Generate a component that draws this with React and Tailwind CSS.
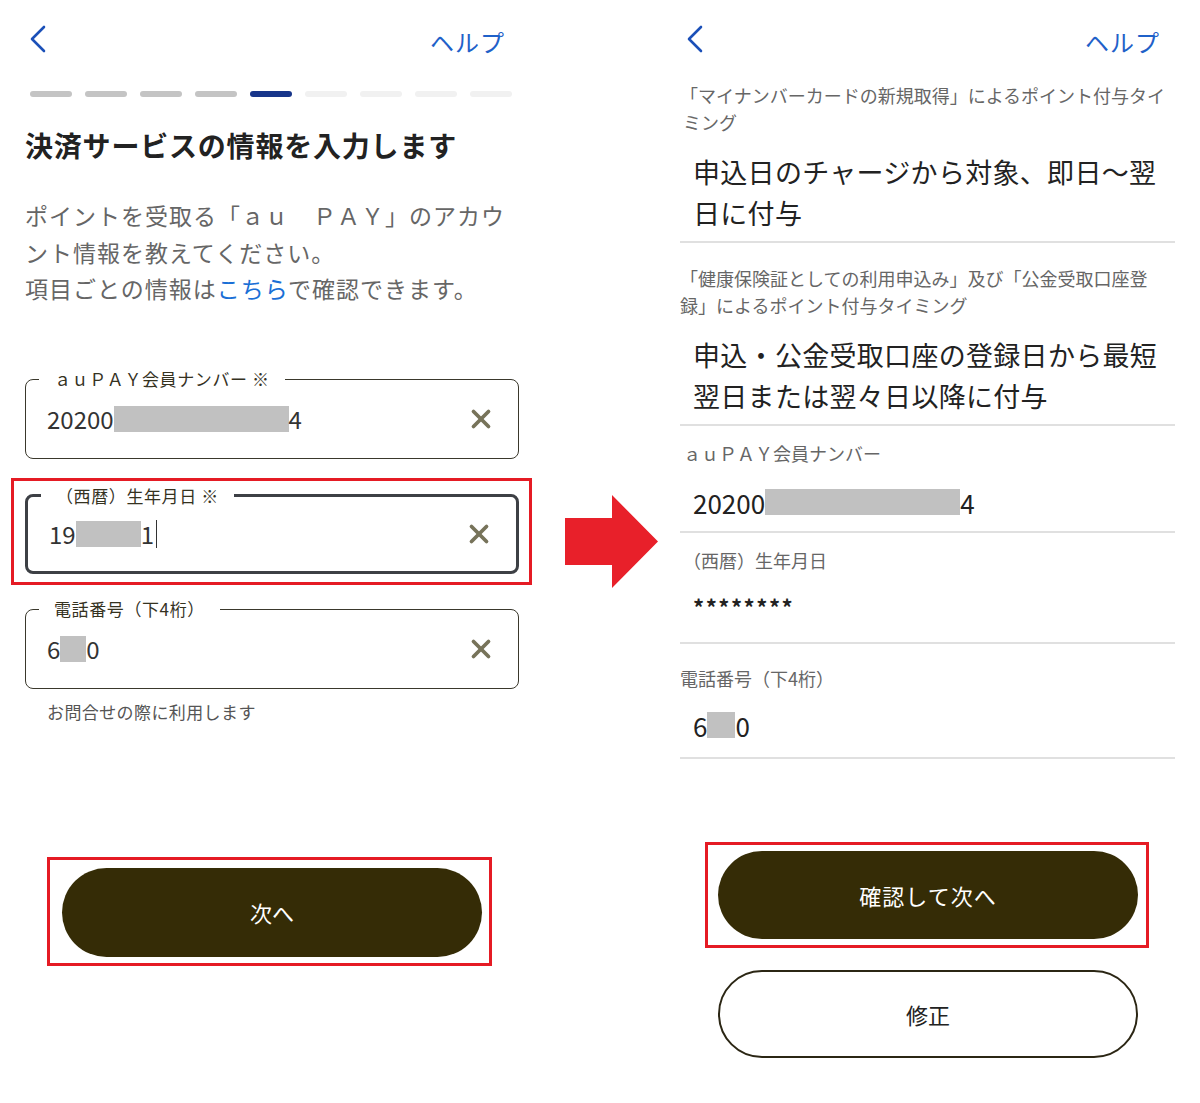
import { X } from "lucide-react";

const BackIcon = () => (
  <svg width="17" height="28" viewBox="0 0 17 28" fill="none">
    <path d="M15 2 L3 14 L15 26" stroke="#1b50b8" strokeWidth="2.6" strokeLinecap="round" strokeLinejoin="round" />
  </svg>
);

const Header = ({ left, right }) => (
  <div className="flex h-[70px] items-start justify-between pt-[25px]">
    <div className={left}>
      <BackIcon />
    </div>
    <div className={`${right} text-[24px] leading-[34px] tracking-[1px] text-[#1f61c9]`}>ヘルプ</div>
  </div>
);

const steps = ["done", "done", "done", "done", "now", "todo", "todo", "todo", "todo"];

const Field = ({ label, children, focused }) => (
  <div
    className={`relative flex h-[80px] items-center rounded-[8px] pl-[21px] pr-[22px] ${
      focused ? "border-[3px] border-[#3d4045]" : "border-[1.5px] border-[#3a382c]"
    }`}
  >
    <div className="absolute -top-[11px] left-[13px] bg-white px-[15px] text-[17px] leading-[20px] tracking-[0.6px] text-[#35321f]">
      {label}
    </div>
    <div className="flex flex-1 items-center text-[24px] leading-[30px] text-[#333]">{children}</div>
    <X size={30} strokeWidth={3} color="#77735a" />
  </div>
);

const Mask = ({ w }) => <span className={`${w} inline-block h-[26px] bg-[#c1c1c1]`} />;

const RowLabel = ({ children }) => (
  <div className="text-[18px] leading-[27px] text-[#666]">{children}</div>
);

const Divider = () => <div className="h-[2px] bg-[#e0e0e0]" />;

export default function App() {
  return (
    <div className="flex h-[1103px] w-[1200px] bg-white font-['Noto_Sans_CJK_JP','Noto_Sans',sans-serif]">
      {/* left screen */}
      <div className="w-[545px] pl-[25px] pr-[26px]">
        <Header left="ml-[4px]" right="mr-[14px]" />
        <div className="mt-[21px] flex gap-[13px] px-[5px]">
          {steps.map((s, i) => (
            <div
              key={i}
              className={`h-[6px] w-[42px] rounded-full ${
                s === "done" ? "bg-[#c4c4c4]" : s === "now" ? "bg-[#17358a]" : "bg-[#f1f1f1]"
              }`}
            />
          ))}
        </div>
        <h1 className="mt-[28px] text-[28px] font-bold leading-[40px] tracking-[0.8px] text-[#222]">
          決済サービスの情報を入力します
        </h1>
        <p className="mt-[32px] text-[23px] leading-[36.5px] tracking-[1px] text-[#666]">
          <span className="block whitespace-nowrap">ポイントを受取る「ａｕ　ＰＡＹ」のアカウ</span>
          <span className="block whitespace-nowrap">ント情報を教えてください。</span>
          <span className="block whitespace-nowrap">
            項目ごとの情報は<span className="text-[#1a6fd6]">こちら</span>で確認できます。
          </span>
        </p>

        <div className="mt-[72px] flex flex-col gap-[35px]">
          <Field label="ａｕＰＡＹ会員ナンバー ※">
            <span>20200</span>
            <Mask w="w-[175px]" />
            <span>4</span>
          </Field>
          <div className="relative">
            <div className="pointer-events-none absolute -bottom-[11px] -left-[14px] -right-[13px] -top-[16px] border-[3px] border-[#e51b24]" />
            <Field label="（西暦）生年月日 ※" focused>
              <span>19</span>
              <Mask w="w-[65px]" />
              <span>1</span>
              <span className="ml-[2px] inline-block h-[28px] w-[1.5px] bg-[#333]" />
            </Field>
          </div>
          <Field label="電話番号（下4桁）">
            <span>6</span>
            <Mask w="w-[26px]" />
            <span>0</span>
          </Field>
        </div>
        <div className="mt-[11px] pl-[22px] text-[17px] leading-[24px] tracking-[0.4px] text-[#555]">
          お問合せの際に利用します
        </div>

        <div className="ml-[22px] mt-[133px] w-[445px] border-[3px] border-[#e51b24] pb-[6px] pl-[12px] pr-[7px] pt-[8px]">
          <button className="flex h-[89px] w-full items-center justify-center rounded-full bg-[#352c06] text-[22px] text-white">
            次へ
          </button>
        </div>
      </div>

      {/* arrow */}
      <div className="w-[135px] pl-[20px] pt-[495px]">
        <svg width="93" height="93" viewBox="0 0 93 93">
          <path d="M0 23 H47 V0 L93 46.5 L47 93 V70 H0 Z" fill="#e8202a" />
        </svg>
      </div>

      {/* right screen */}
      <div className="w-[495px]">
        <Header left="ml-[6px]" right="mr-[15px]" />
        <div className="mt-[12px]">
          <RowLabel>
            <span className="block whitespace-nowrap">「マイナンバーカードの新規取得」によるポイント付与タイ</span>
            <span className="block whitespace-nowrap pl-[3px]">ミング</span>
          </RowLabel>
        </div>
        <div className="mt-[15px] pl-[13px] text-[27px] leading-[41px] tracking-[0.3px] text-[#222]">
          <span className="block whitespace-nowrap">申込日のチャージから対象、即日〜翌</span>
          <span className="block whitespace-nowrap">日に付与</span>
        </div>
        <div className="mt-[8px]">
          <Divider />
        </div>
        <div className="mt-[22px]">
          <RowLabel>
            <span className="block whitespace-nowrap">「健康保険証としての利用申込み」及び「公金受取口座登</span>
            <span className="block whitespace-nowrap">録」によるポイント付与タイミング</span>
          </RowLabel>
        </div>
        <div className="mt-[15px] pl-[13px] text-[27px] leading-[41px] tracking-[0.3px] text-[#222]">
          <span className="block whitespace-nowrap">申込・公金受取口座の登録日から最短</span>
          <span className="block whitespace-nowrap">翌日または翌々日以降に付与</span>
        </div>
        <div className="mt-[8px]">
          <Divider />
        </div>

        <div className="mt-[14px] pl-[3px]">
          <RowLabel>ａｕＰＡＹ会員ナンバー</RowLabel>
        </div>
        <div className="mt-[17px] flex h-[36px] items-center pl-[13px] text-[26px] text-[#222]">
          <span>20200</span>
          <span className="inline-block h-[26px] w-[195px] bg-[#c1c1c1]" />
          <span>4</span>
        </div>
        <div className="mt-[11px]">
          <Divider />
        </div>

        <div className="mt-[14px] pl-[3px]">
          <RowLabel>（西暦）生年月日</RowLabel>
        </div>
        <div className="mt-[17px] h-[30px] pl-[13px] text-[22px] font-bold leading-[30px] tracking-[1.5px] text-[#222]">
          ********
        </div>
        <div className="mt-[21px]">
          <Divider />
        </div>

        <div className="mt-[21px]">
          <RowLabel>電話番号（下4桁）</RowLabel>
        </div>
        <div className="mt-[15px] flex h-[36px] items-center pl-[13px] text-[26px] text-[#222]">
          <span>6</span>
          <span className="inline-block h-[26px] w-[28px] bg-[#c1c1c1]" />
          <span>0</span>
        </div>
        <div className="mt-[14px]">
          <Divider />
        </div>

        <div className="ml-[25px] mt-[83px] w-[444px] border-[3px] border-[#e51b24] pb-[6px] pl-[10px] pr-[8px] pt-[6px]">
          <button className="flex h-[88px] w-full items-center justify-center rounded-full bg-[#352c06] text-[22px] tracking-[1px] text-white">
            確認して次へ
          </button>
        </div>
        <button className="ml-[38px] mt-[22px] flex h-[88px] w-[420px] items-center justify-center rounded-full border-2 border-[#2b2614] bg-white text-[22px] text-[#222]">
          修正
        </button>
      </div>
    </div>
  );
}
